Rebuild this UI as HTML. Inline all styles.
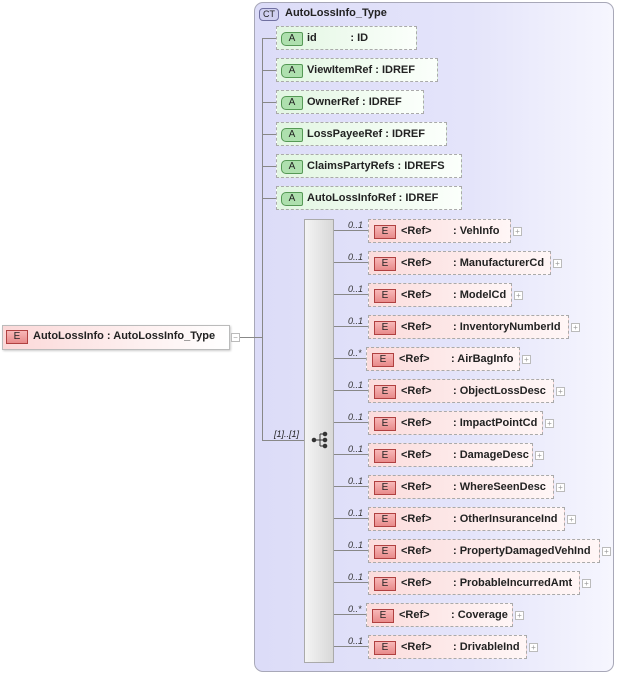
<!DOCTYPE html>
<html><head><meta charset="utf-8"><style>
body{margin:0;width:619px;height:676px;background:#fff;position:relative;overflow:hidden;font-family:"Liberation Sans",sans-serif;font-size:11px;font-weight:bold;color:#222}
div{position:absolute;box-sizing:border-box}
.ct{left:254px;top:2px;width:360px;height:670px;border:1px solid #a8a8b8;border-radius:9px;background:linear-gradient(90deg,#dcdcf8 0%,#e4e4fa 60%,#f6f6fe 100%)}
.ctb{left:259px;top:8px;width:20px;height:13px;border:1px solid #7070a0;border-radius:4px;background:#d0d0f0;font-size:9px;font-weight:normal;text-align:center;line-height:11px}
.at{left:276px;height:24px;border:1px dashed #aaa;background:linear-gradient(90deg,#e2f6e2,#fbfffb);}
.ab{left:4px;top:5px;width:22px;height:14px;border:1px solid #559955;border-radius:5px 2px 2px 5px;background:#aee0ae;font-size:10px;font-weight:normal;text-align:center;line-height:12px}
.at span{position:absolute;top:5px;left:30px;white-space:pre}
.el{left:368px;height:24px;border:1px dashed #aaa;background:linear-gradient(90deg,#fbdcdc,#fff6f6);}
.eb{left:5px;top:5px;width:22px;height:14px;border:1px solid #b04040;background:linear-gradient(#f8b8b8,#e88a8a);font-size:10px;font-weight:normal;text-align:center;line-height:12px}
.el span{position:absolute;top:5px;white-space:pre}
.r1{left:32px}.r2{left:84px}
.pl{width:9px;height:9px;border:1px solid #bbb;background:#fff;font-size:8px;line-height:7px;text-align:center;color:#999;font-weight:normal}
.cd{left:348px;font-size:9px;font-style:italic;font-weight:normal;color:#333}
.h{height:1px;background:#888}
.v{width:1px;background:#888}
</style></head><body>
<div class="ct"></div>
<div class="ctb">CT</div>
<div style="left:285px;top:7px">AutoLossInfo_Type</div>
<div class="v" style="left:262px;top:38px;height:403px"></div>
<div class="h" style="left:262px;top:38px;width:14px"></div>
<div class="h" style="left:262px;top:70px;width:14px"></div>
<div class="h" style="left:262px;top:102px;width:14px"></div>
<div class="h" style="left:262px;top:134px;width:14px"></div>
<div class="h" style="left:262px;top:166px;width:14px"></div>
<div class="h" style="left:262px;top:198px;width:14px"></div>
<div class="at" style="top:26px;width:141px"><div class="ab">A</div><span>id           : ID</span></div>
<div class="at" style="top:58px;width:162px"><div class="ab">A</div><span>ViewItemRef : IDREF</span></div>
<div class="at" style="top:90px;width:148px"><div class="ab">A</div><span>OwnerRef : IDREF</span></div>
<div class="at" style="top:122px;width:171px"><div class="ab">A</div><span>LossPayeeRef : IDREF</span></div>
<div class="at" style="top:154px;width:186px"><div class="ab">A</div><span>ClaimsPartyRefs : IDREFS</span></div>
<div class="at" style="top:186px;width:186px"><div class="ab">A</div><span>AutoLossInfoRef : IDREF</span></div>

<div style="left:2px;top:325px;width:228px;height:25px;border:1px solid #bbb;background:linear-gradient(90deg,#fbd8d8,#fff);box-shadow:1px 1px 2px #ccc"></div>
<div class="eb" style="left:6px;top:330px">E</div>
<div style="left:33px;top:330px">AutoLossInfo : AutoLossInfo_Type</div>
<div class="pl" style="left:231px;top:333px">−</div>
<div class="h" style="left:240px;top:337px;width:22px"></div>
<div class="h" style="left:262px;top:440px;width:42px"></div>
<div style="left:274px;top:429px;font-size:9px;font-style:italic;font-weight:normal">[1]..[1]</div>
<div style="left:304px;top:219px;width:30px;height:444px;border:1px solid #aaa;background:linear-gradient(90deg,#f4f4f4,#d8d8d8)"></div>
<svg style="position:absolute;left:311px;top:431px" width="18" height="18"><g fill="#333" stroke="#333"><circle cx="3" cy="9" r="1.8"/><line x1="3" y1="9" x2="9" y2="9"/><line x1="9" y1="3" x2="9" y2="15"/><line x1="9" y1="3" x2="14" y2="3"/><line x1="9" y1="9" x2="14" y2="9"/><line x1="9" y1="15" x2="14" y2="15"/><circle cx="14" cy="3" r="1.8"/><circle cx="14" cy="9" r="1.8"/><circle cx="14" cy="15" r="1.8"/></g></svg>

<div class="v" style="left:333px;top:230px;height:0"></div>
<!-- connectors -->
<div class="h" style="left:334px;top:230px;width:34px"></div>
<div class="h" style="left:334px;top:262px;width:34px"></div>
<div class="h" style="left:334px;top:294px;width:34px"></div>
<div class="h" style="left:334px;top:326px;width:34px"></div>
<div class="h" style="left:334px;top:358px;width:34px"></div>
<div class="h" style="left:334px;top:390px;width:34px"></div>
<div class="h" style="left:334px;top:422px;width:34px"></div>
<div class="h" style="left:334px;top:454px;width:34px"></div>
<div class="h" style="left:334px;top:486px;width:34px"></div>
<div class="h" style="left:334px;top:518px;width:34px"></div>
<div class="h" style="left:334px;top:550px;width:34px"></div>
<div class="h" style="left:334px;top:582px;width:34px"></div>
<div class="h" style="left:334px;top:614px;width:34px"></div>
<div class="h" style="left:334px;top:646px;width:34px"></div>

<div class="cd" style="top:220px">0..1</div><div class="el" style="top:219px;width:143px"><div class="eb">E</div><span class="r1">&lt;Ref&gt;</span><span class="r2">: VehInfo</span></div><div class="pl" style="left:513px;top:227px">+</div>
<div class="cd" style="top:252px">0..1</div><div class="el" style="top:251px;width:183px"><div class="eb">E</div><span class="r1">&lt;Ref&gt;</span><span class="r2">: ManufacturerCd</span></div><div class="pl" style="left:553px;top:259px">+</div>
<div class="cd" style="top:284px">0..1</div><div class="el" style="top:283px;width:144px"><div class="eb">E</div><span class="r1">&lt;Ref&gt;</span><span class="r2">: ModelCd</span></div><div class="pl" style="left:514px;top:291px">+</div>
<div class="cd" style="top:316px">0..1</div><div class="el" style="top:315px;width:201px"><div class="eb">E</div><span class="r1">&lt;Ref&gt;</span><span class="r2">: InventoryNumberId</span></div><div class="pl" style="left:571px;top:323px">+</div>
<div class="cd" style="top:348px">0..*</div><div class="el" style="top:347px;left:366px;width:154px"><div class="eb">E</div><span class="r1">&lt;Ref&gt;</span><span class="r2">: AirBagInfo</span></div><div class="pl" style="left:522px;top:355px">+</div>
<div class="cd" style="top:380px">0..1</div><div class="el" style="top:379px;width:186px"><div class="eb">E</div><span class="r1">&lt;Ref&gt;</span><span class="r2">: ObjectLossDesc</span></div><div class="pl" style="left:556px;top:387px">+</div>
<div class="cd" style="top:412px">0..1</div><div class="el" style="top:411px;width:175px"><div class="eb">E</div><span class="r1">&lt;Ref&gt;</span><span class="r2">: ImpactPointCd</span></div><div class="pl" style="left:545px;top:419px">+</div>
<div class="cd" style="top:444px">0..1</div><div class="el" style="top:443px;width:165px"><div class="eb">E</div><span class="r1">&lt;Ref&gt;</span><span class="r2">: DamageDesc</span></div><div class="pl" style="left:535px;top:451px">+</div>
<div class="cd" style="top:476px">0..1</div><div class="el" style="top:475px;width:186px"><div class="eb">E</div><span class="r1">&lt;Ref&gt;</span><span class="r2">: WhereSeenDesc</span></div><div class="pl" style="left:556px;top:483px">+</div>
<div class="cd" style="top:508px">0..1</div><div class="el" style="top:507px;width:197px"><div class="eb">E</div><span class="r1">&lt;Ref&gt;</span><span class="r2">: OtherInsuranceInd</span></div><div class="pl" style="left:567px;top:515px">+</div>
<div class="cd" style="top:540px">0..1</div><div class="el" style="top:539px;width:232px"><div class="eb">E</div><span class="r1">&lt;Ref&gt;</span><span class="r2">: PropertyDamagedVehInd</span></div><div class="pl" style="left:602px;top:547px">+</div>
<div class="cd" style="top:572px">0..1</div><div class="el" style="top:571px;width:212px"><div class="eb">E</div><span class="r1">&lt;Ref&gt;</span><span class="r2">: ProbableIncurredAmt</span></div><div class="pl" style="left:582px;top:579px">+</div>
<div class="cd" style="top:604px">0..*</div><div class="el" style="top:603px;left:366px;width:147px"><div class="eb">E</div><span class="r1">&lt;Ref&gt;</span><span class="r2">: Coverage</span></div><div class="pl" style="left:515px;top:611px">+</div>
<div class="cd" style="top:636px">0..1</div><div class="el" style="top:635px;width:159px"><div class="eb">E</div><span class="r1">&lt;Ref&gt;</span><span class="r2">: DrivableInd</span></div><div class="pl" style="left:529px;top:643px">+</div>
</body></html>
